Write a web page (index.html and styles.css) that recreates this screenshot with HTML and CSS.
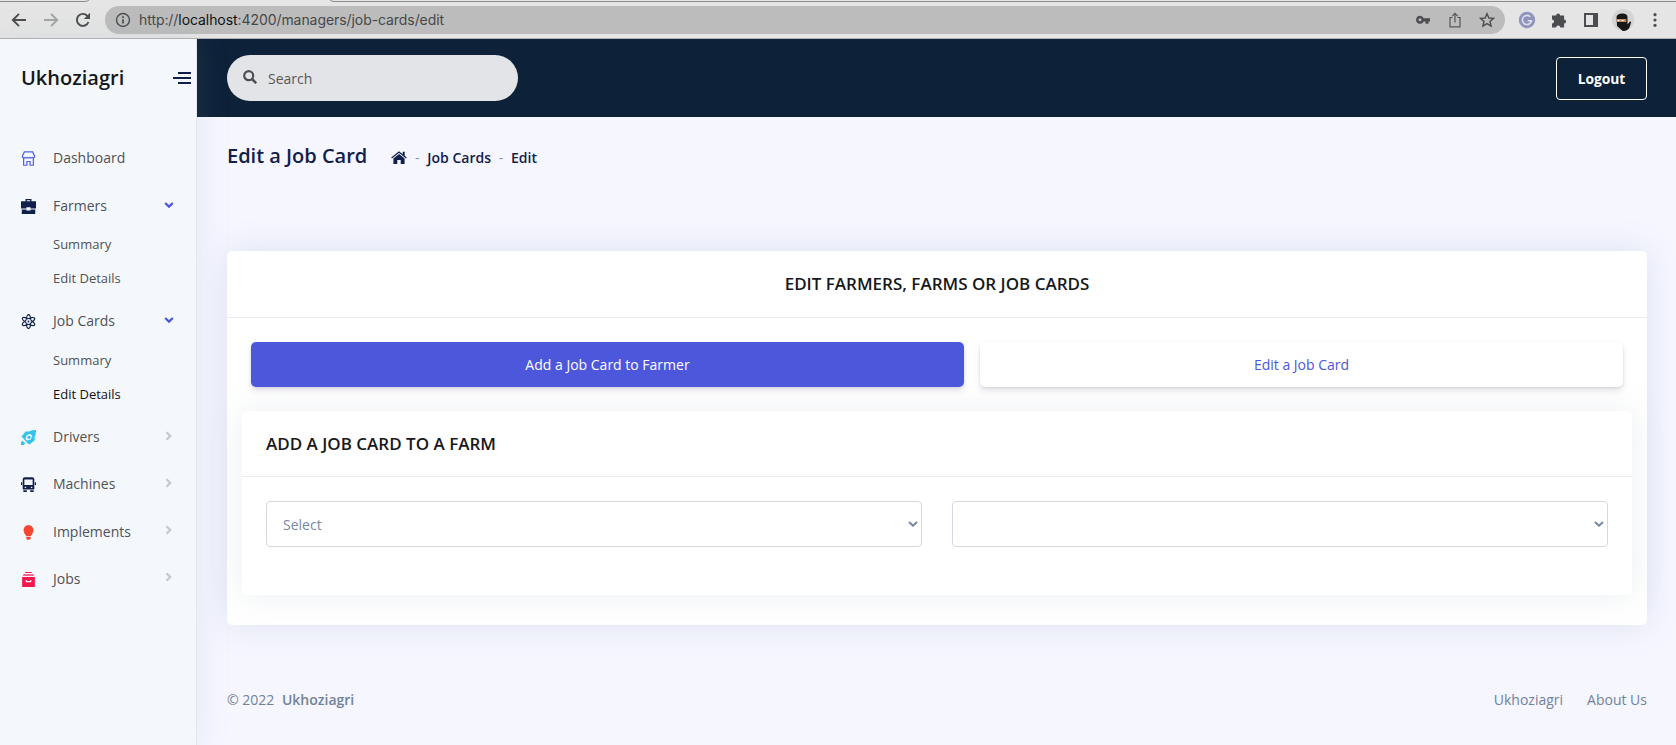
FILE: index.html
```html
<!DOCTYPE html>
<html lang="en">
<head>
<meta charset="utf-8">
<title>Edit a Job Card</title>
<link rel="stylesheet" href="styles.css">
</head>
<body>
<header class="browser">
  <svg class="tabs" width="1676" height="3" viewBox="0 0 1676 3"><path d="M0 1.500H84Q88 1.500 89 0M1676 1.500H335Q331 1.500 330 0" fill="none" stroke="#8b8b8b"/></svg>
  <div class="nav-icons">
    <svg width="16" height="16" viewBox="0 0 16 16"><path d="M15 8H2M8 1.800 1.800 8 8 14.200" class="line"/></svg>
    <svg width="16" height="16" viewBox="0 0 16 16"><path d="M1 8h13M8 1.800 14.200 8 8 14.200" class="line faded"/></svg>
    <svg width="16" height="16" viewBox="0 0 16 16"><path d="M13.500 10A6 6 0 1 1 12.300 3.800L14 5.500" class="line"/><path d="M15 .8V7H8.800z" fill="#4b4d51"/></svg>
  </div>
  <div class="address">
    <svg width="16" height="16" viewBox="0 0 16 16"><circle cx="8" cy="8" r="6.500" fill="none" stroke="#4b4d51" stroke-width="1.400"/><path d="M8 7.200v4.200M8 4.200v1.700" stroke="#4b4d51" stroke-width="1.700"/></svg>
    <span class="url">http://<b>localhost</b>:4200/managers/job-cards/edit</span>
    <div class="address-tools">
      <svg width="16" height="16" viewBox="0 0 16 16"><path d="M5 3.800a4 4 0 0 1 3.700 2.500H15v3.200h-1.500v2.300h-3V9.500H8.700A4 4 0 1 1 5 3.800zm0 2.500a1.500 1.500 0 1 0 0 3 1.500 1.500 0 0 0 0-3z" fill="#4b4d51"/></svg>
      <svg width="16" height="16" viewBox="0 0 16 16"><path d="M5.500 5.500H3v9.300h10V5.500h-2.500M8 10.500V1.500M5.200 4.200 8 1.400l2.800 2.800" fill="none" stroke="#55575a" stroke-width="1.200"/></svg>
      <svg width="16" height="16" viewBox="0 0 16 16"><path d="m8 1.700 1.900 4.300 4.700.4-3.600 3.100 1.100 4.600L8 11.600l-4.100 2.500L5 9.500 1.400 6.400l4.700-.4z" fill="none" stroke="#4b4d51" stroke-width="1.400"/></svg>
    </div>
  </div>
  <div class="extensions">
    <svg width="18" height="18" viewBox="0 0 18 18"><circle cx="9" cy="9" r="8.200" fill="#8f94bd"/><path d="M12.300 5.800A4.600 4.600 0 1 0 13.500 9.800H9.700" fill="none" stroke="#e0e1ea" stroke-width="1.500"/></svg>
    <svg width="18" height="18" viewBox="0 0 18 18"><path d="M2 4.500h4.100a2 2 0 1 1 4 0h4v4.100a2 2 0 1 1 0 4v4H10.300a2.100 2.100 0 0 0-4.200 0H2v-4a2 2 0 0 0 0-4.100z" fill="#4b4d51"/></svg>
    <svg width="18" height="18" viewBox="0 0 18 18"><path d="M2 2h14v14H2zM4 4v10h7V4z" fill="#4b4d51" fill-rule="evenodd"/></svg>
    <svg class="avatar" width="22" height="22" viewBox="0 0 22 22"><circle cx="11" cy="11" r="11" fill="#d3d3d3"/><path d="M4.500 8q.5-3.500 6-3.500Q15.500 4.500 15.500 8v7.500l2.500-3 1.200.5-1.700 5.500q-2.500 4-7 3.300L5 17z" fill="#161718"/><path d="M4.500 10h9.800v2.900H5z" fill="#c6885f"/><path d="M5.500 11.500h2M9.500 11.500h2" stroke="#fff" stroke-width="1.200"/></svg>
    <svg width="18" height="18" viewBox="0 0 18 18" fill="#4b4d51"><circle cx="9" cy="3.700" r="1.600"/><circle cx="9" cy="9" r="1.600"/><circle cx="9" cy="14.300" r="1.600"/></svg>
  </div>
</header>
<div class="app">
  <aside class="sidebar">
    <div class="brand"><strong>Ukhoziagri</strong>
      <svg width="18" height="12" viewBox="0 0 18 12"><path d="M5 1h13M0 6h18M5 11h13" stroke="#11204a" stroke-width="2"/></svg>
    </div>
    <nav class="menu">
      <a class="item"><svg class="ico" viewBox="0 0 16 16"><path d="M3.600 1h8.800L14.400 5v1.500q-1 1.400-2.500.4-1.200 1-2.500 0-1.400 1-2.700 0-1.300 1-2.600 0-1.500 1-2.500-.4V5zM2.800 8v7.200h3.500v-4h3.400v4h3.500V8" fill="none" stroke="#5060e6" stroke-width="1.300"/></svg>Dashboard</a>
      <a class="item"><svg class="ico" viewBox="0 0 16 16" fill="#11204a"><path fill-rule="evenodd" d="M4.800 2.500V0h6.400v2.500H16V10h-5.800V8.800H5.800V10H0V2.500zm1.400 0h3.600V1.300H6.200zM.8 11.200h5v1h4.400v-1h5V16H.8z"/></svg>Farmers<svg class="arrow" viewBox="0 0 10 10"><path d="m1.200 3 3.800 3.600L8.800 3" fill="none" stroke="#4c57dc" stroke-width="2.300"/></svg></a>
      <a class="sub">Summary</a>
      <a class="sub">Edit Details</a>
      <a class="item second"><svg class="ico" viewBox="0 0 16 16" fill="none" stroke="#11204a" stroke-width="1.300"><ellipse cx="8" cy="8" rx="2.400" ry="7.400"/><ellipse cx="8" cy="8" rx="2.400" ry="7.400" transform="rotate(60 8 8)"/><ellipse cx="8" cy="8" rx="2.400" ry="7.400" transform="rotate(-60 8 8)"/><circle cx="8" cy="8" r="2.600" fill="#f4f8fd" stroke="none"/><circle cx="8" cy="8" r="1" fill="#11204a" stroke="none"/></svg>Job Cards<svg class="arrow" viewBox="0 0 10 10"><path d="m1.200 3 3.800 3.600L8.800 3" fill="none" stroke="#4c57dc" stroke-width="2.300"/></svg></a>
      <a class="sub">Summary</a>
      <a class="sub active">Edit Details</a>
      <a class="item third"><svg class="ico" viewBox="0 0 16 16" fill="#33c3ec"><path fill-rule="evenodd" d="M16 0q.2 4.500-1.600 7.600l.4 3.400-3.500 2.500-2.300 2-2-1.500L2.500 9 .5 7 2.300 4.800 5 1.700l3.500-.2Q11.500 0 16 0zM9.800 4 6 5.700 4.800 9.500 6.500 11.200 10.300 10l1.800-3.600zM8.500 6a1.600 1.600 0 1 1 0 3.600 1.800 1.800 0 0 1 0-3.600z"/><path d="m1.800 11.500 2.700 2.800L2.800 16H0v-3z"/></svg>Drivers<svg class="arrow right" viewBox="0 0 10 10"><path d="M2.500 1.300 6.200 5 2.500 8.700" fill="none" stroke="#c5cad0" stroke-width="2.300"/></svg></a>
      <a class="item"><svg class="ico" viewBox="0 0 16 16" fill="#11204a"><path fill-rule="evenodd" d="M4 .3h8q2.200 0 2.200 2v11H1.800v-11q0-2 2.200-2zM3.600 2.700v5.800h8.800V2.700zM4 10.300v1.400h1.500v-1.400zm6.500 0v1.400H12v-1.400zM2.500 14h3.700v2H2.500zm7.300 0h3.700v2H9.800zM0 5.500h1.200v3H0zm14.800 0H16v3h-1.200z"/></svg>Machines<svg class="arrow right" viewBox="0 0 10 10"><path d="M2.500 1.300 6.200 5 2.500 8.700" fill="none" stroke="#c5cad0" stroke-width="2.300"/></svg></a>
      <a class="item"><svg class="ico" viewBox="0 0 16 16" fill="#f5472f"><path d="M8 0a5.400 5.400 0 0 1 5.300 5.500Q13.300 8.500 10.300 12H5.700Q2.700 8.500 2.700 5.500A5.400 5.400 0 0 1 8 0zM5.500 12.900h5q0 2.900-1.300 2.900H6.800q-1.300 0-1.300-2.900z"/></svg>Implements<svg class="arrow right" viewBox="0 0 10 10"><path d="M2.500 1.300 6.200 5 2.500 8.700" fill="none" stroke="#c5cad0" stroke-width="2.300"/></svg></a>
      <a class="item"><svg class="ico" viewBox="0 0 16 16" fill="#f5164e"><path d="M4.500 0h7v1.100h-7z"/><path d="M2.800 2.200h10.400l.8 2H2z" opacity=".65"/><path fill-rule="evenodd" d="M1.200 5.300h13.600V16H1.200zM5 8.500v2.300h6V8.500H9.800v1.200H6.200V8.500z"/></svg>Jobs<svg class="arrow right" viewBox="0 0 10 10"><path d="M2.500 1.300 6.200 5 2.500 8.700" fill="none" stroke="#c5cad0" stroke-width="2.300"/></svg></a>
    </nav>
  </aside>
  <div class="content">
    <div class="topbar">
      <div class="search"><svg width="14" height="14" viewBox="0 0 14 14"><circle cx="5.700" cy="5.700" r="4.500" fill="none" stroke="#4d4f53" stroke-width="2.200"/><path d="m9 9 4.200 4.200" stroke="#4d4f53" stroke-width="2.500"/></svg><span>Search</span></div>
      <button class="logout">Logout</button>
    </div>
    <main class="main">
      <div class="heading">
        <h1>Edit a Job Card</h1>
        <div class="crumbs"><svg width="16" height="14" viewBox="0 0 16 14" fill="#11204a"><path d="M8 2.900 13.600 7.500V13H9.700V9H6.300v4H2.400V7.500z"/><path d="m.6 7.100L8 1l7.400 6.100" fill="none" stroke="#11204a" stroke-width="1.300"/><path d="M11.700.8h2v4.500l-2-1.600z"/></svg><i>-</i><span>Job Cards</span><i>-</i><span>Edit</span></div>
      </div>
      <section class="card outer">
        <h2 class="card-title centered">EDIT FARMERS, FARMS OR JOB CARDS</h2>
        <div class="tabs-row"><button class="tab on">Add a Job Card to Farmer</button><button class="tab">Edit a Job Card</button></div>
        <section class="card inner">
          <h2 class="card-title">ADD A JOB CARD TO A FARM</h2>
          <div class="fields">
            <div class="select"><span>Select</span><svg viewBox="0 0 10 10"><path d="m1 3 4 3.700L9 3" fill="none" stroke="#74859c" stroke-width="1.900"/></svg></div>
            <div class="select"><span></span><svg viewBox="0 0 10 10"><path d="m1 3 4 3.700L9 3" fill="none" stroke="#74859c" stroke-width="1.900"/></svg></div>
          </div>
        </section>
      </section>
      <footer class="footer"><span>© 2022 <b>Ukhoziagri</b></span><span class="links"><a>Ukhoziagri</a><a>About Us</a></span></footer>
    </main>
  </div>
</div>
</body>
</html>
```
FILE: styles.css
```css
* { box-sizing: border-box; }
body { margin: 0; width: 1676px; height: 745px; overflow: hidden; font: 14px/21px "Open Sans", sans-serif; background: #f5f6ff; color: #525f7f; }
svg { display: block; flex: none; }
h1, h2 { margin: 0; font-weight: 600; }
button { font: inherit; }

.browser { position: relative; height: 39px; padding: 1px 0 0 10px; display: flex; align-items: center; background: #e5e5e5; border-bottom: 1px solid #b2b2b2; }
.tabs { position: absolute; top: 0; left: 0; }
.line { fill: none; stroke: #4b4d51; stroke-width: 1.9; }
.faded { stroke: #a2a3a5; }
.nav-icons { display: flex; gap: 16px; width: 95px; padding-left: 1px; }
.address { flex: none; width: 1400px; height: 28px; border-radius: 14px; background: #bcbcbc; display: flex; align-items: center; padding: 0 17px 0 10px; }
.url { font-family: Inter, sans-serif; font-size: 14px; letter-spacing: -.07px; color: #46484b; margin-left: 8px; flex: 1; white-space: nowrap; }
.url b { font-weight: 400; color: #111; }
.address-tools { display: flex; gap: 16px; margin-right: -7px; }
.extensions { display: flex; align-items: center; gap: 14px; padding-left: 13px; }
.avatar { margin: 0 -2px; }

.app { display: flex; height: 706px; }
.sidebar { position: relative; width: 197px; background: #f4f8fd; border-right: 1px solid #e2e6ed; box-shadow: 0 0 32px rgba(136, 152, 170, .15); }
.brand { height: 78px; display: flex; align-items: center; justify-content: space-between; padding: 0 5px 0 21px; }
.brand strong { font-size: 20px; font-weight: 600; color: #16181b; margin-bottom: 2px; }
.menu { padding-top: 17px; display: flex; flex-direction: column; }
.item { height: 47.3px; display: flex; align-items: center; padding: 0 22px 0 21px; color: #505154; }
.item:nth-child(2) { margin-top: 1px; margin-bottom: -2px; }
.second { margin-top: 1px; }
.third { margin-top: 1px; }
.ico { width: 15px; height: 15px; margin: 2px 17px 0 0; }
.arrow { width: 10px; height: 10px; margin-left: auto; margin-bottom: 1px; }
.arrow.right { margin-bottom: 2px; }
.sub { height: 34px; display: flex; align-items: center; padding-left: 53px; font-size: 13px; color: #505154; }
.active { color: #111; }

.content { flex: 1; display: flex; flex-direction: column; }
.topbar { height: 78px; display: flex; align-items: center; justify-content: space-between; padding: 0 29px 0 30px; background: #0d2139; }
.search { width: 291px; height: 46px; border-radius: 23px; background: #e3e4e8; color: #55575b; display: flex; align-items: center; gap: 11px; padding: 0 16px; }
.search svg { margin-bottom: 2px; }
.logout { width: 91px; height: 43px; border: 1px solid #fff; border-radius: 4px; background: none; color: #fff; font-weight: 700; font-size: 13.8px; padding: 0; }
.main { padding: 0 29px 0 30px; }
.heading { height: 134px; display: flex; padding-top: 25px; gap: 24px; align-items: flex-start; color: #11204a; }
.heading h1 { font-size: 20px; line-height: 28px; }
.crumbs { display: flex; align-items: center; height: 31px; font-weight: 600; }
.crumbs i { font-style: normal; font-weight: 400; color: #8898aa; width: 20px; text-align: center; }
.card { background: #fff; border-radius: 5px; box-shadow: 0 0 32px rgba(136, 152, 170, .2); }
.outer { height: 374px; }
.card-title { height: 67px; padding: 20px 24px; border-bottom: 1px solid #ebecef; font-size: 17px; line-height: 26px; color: #16181b; }
.centered { text-align: center; }
.tabs-row { display: grid; grid-template-columns: 713px 643px; gap: 16px; padding: 24px 24px 0; }
.tab { height: 45px; border: 0; border-radius: 5px; background: #fff; color: #4c57dc; font-weight: 500; box-shadow: 0 4px 6px rgba(50, 50, 93, .11), 0 1px 3px rgba(0, 0, 0, .1); }
.tab.on { background: #4c57dc; color: #fff; }
.inner { margin: 24px 15px 0; height: 184px; box-shadow: 0 0 32px rgba(136, 152, 170, .17); }
.inner .card-title { height: 66px; }
.fields { display: grid; grid-template-columns: 1fr 1fr; gap: 30px; padding: 24px; }
.select { height: 46px; border: 1px solid #d1d8df; border-radius: 4px; display: flex; align-items: center; justify-content: space-between; padding: 0 3px 0 16px; color: #78899f; }
.select svg { width: 10px; height: 10px; margin-bottom: 1px; }
.footer { margin-top: 64px; display: flex; justify-content: space-between; color: #728298; }
.footer b { font-weight: 600; margin-left: 4px; }
.links { display: flex; gap: 24px; }
```
